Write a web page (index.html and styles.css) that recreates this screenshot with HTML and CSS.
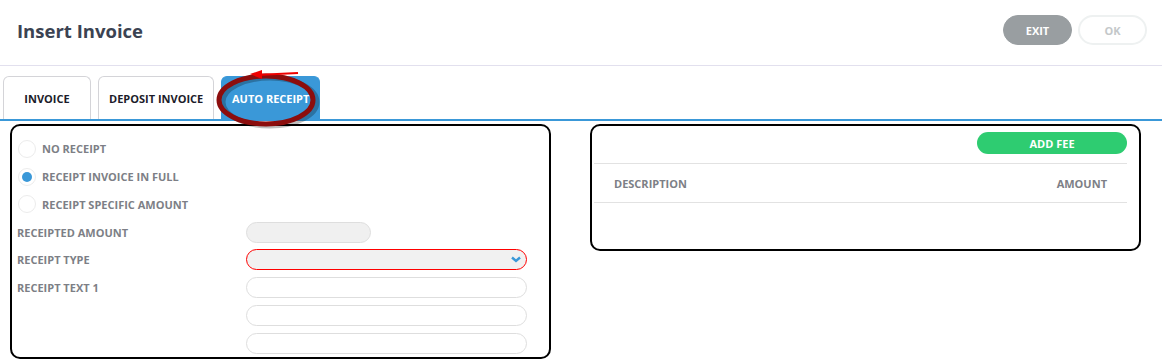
FILE: index.html
```html
<!DOCTYPE html>
<html lang="en">
<head>
    <meta charset="UTF-8">
    <meta name="viewport" content="width=device-width, initial-scale=1.0">
    <link rel="stylesheet" href="styles.css">
    <title>Insert Invoice</title>
</head>
<body>
    <header class="topbar">
        <h1>Insert Invoice</h1>
        <div class="actions">
            <button class="btn exit">EXIT</button>
            <button class="btn ok">OK</button>
        </div>
    </header>

    <nav class="tabs">
        <div class="tab">INVOICE</div>
        <div class="tab">DEPOSIT INVOICE</div>
        <div class="tab active">
            AUTO RECEIPT
            <svg class="mark" width="120" height="70" viewBox="0 0 120 70">
                <ellipse cx="58" cy="35" rx="47" ry="24" fill="none" stroke="#000" stroke-opacity=".25" stroke-width="5"/>
                <ellipse cx="54" cy="33" rx="47" ry="24" fill="none" stroke="#8c0d0d" stroke-width="5"/>
                <path d="M44 8 L86 6" stroke="#e00" stroke-width="2" fill="none"/>
                <path d="M38 7 L50 3 L50 12 Z" fill="#e00"/>
            </svg>
        </div>
    </nav>

    <main class="content">
        <section class="panel receipt">
            <label class="radio"><span class="dot"></span>NO RECEIPT</label>
            <label class="radio"><span class="dot on"></span>RECEIPT INVOICE IN FULL</label>
            <label class="radio"><span class="dot"></span>RECEIPT SPECIFIC AMOUNT</label>

            <div class="field">
                <span class="label">RECEIPTED AMOUNT</span>
                <div class="input short disabled"></div>
            </div>
            <div class="field">
                <span class="label">RECEIPT TYPE</span>
                <div class="input select">
                    <svg width="10" height="7" viewBox="0 0 10 7"><path d="M1 1.5 L5 5 L9 1.5" stroke="#3a98d8" stroke-width="2.4" fill="none"/></svg>
                </div>
            </div>
            <div class="field">
                <span class="label">RECEIPT TEXT 1</span>
                <div class="input"></div>
            </div>
            <div class="field">
                <span class="label"></span>
                <div class="input"></div>
            </div>
            <div class="field">
                <span class="label"></span>
                <div class="input"></div>
            </div>
        </section>

        <section class="panel fees">
            <div class="fee-bar">
                <button class="btn add">ADD FEE</button>
            </div>
            <div class="fee-head">
                <span>DESCRIPTION</span>
                <span>AMOUNT</span>
            </div>
        </section>
    </main>
</body>
</html>
```

FILE: styles.css
```css
body{
    margin: 0;
    font-family: "Open Sans", "Noto Sans", sans-serif;
    background: #fff;
    color: #333;
}

.topbar{
    height: 60px;
    padding: 0 15px 5px 17px;
    display: flex;
    align-items: center;
    justify-content: space-between;
    border-bottom: 1px solid #e2e0ee;
}

.topbar h1{
    margin: 0;
    font-size: 18.5px;
    font-weight: 700;
    color: #3b4352;
}

.actions{
    display: flex;
    gap: 6px;
}

.btn{
    font-family: inherit;
    font-size: 11px;
    font-weight: 700;
    border-radius: 16px;
    cursor: pointer;
}

.exit, .ok{
    width: 69px;
    height: 30px;
}

.exit{
    background: #999ea1;
    border: 1px solid #999ea1;
    color: #fff;
}

.ok{
    background: #fff;
    border: 2px solid #eef1f1;
    color: #c4c8ca;
}

.tabs{
    display: flex;
    gap: 7px;
    padding: 10px 0 0 3px;
    border-bottom: 2px solid #3a98d8;
}

.tab{
    position: relative;
    height: 42px;
    padding: 0 10px;
    display: flex;
    align-items: center;
    justify-content: center;
    white-space: nowrap;
    font-size: 11px;
    font-weight: 700;
    color: #1c1c2a;
    border: 1px solid #d4d4d8;
    border-bottom: none;
    border-radius: 6px 6px 0 0;
}

.tab:first-child{
    width: 66px;
}

.tab.active{
    width: 77px;
    background: #3a98d8;
    border-color: #3a98d8;
    color: #fff;
}

.mark{
    position: absolute;
    left: -10px;
    top: -10px;
    z-index: 2;
}

.content{
    display: flex;
    gap: 39px;
    align-items: flex-start;
    padding: 3px 21px 0 10px;
}

.panel{
    border: 2px solid #000;
    border-radius: 10px;
    box-sizing: border-box;
}

.receipt{
    width: 541px;
    height: 235px;
    padding: 9px 22px 0 5px;
    display: flex;
    flex-direction: column;
}

.radio, .field{
    height: 28px;
    display: flex;
    align-items: center;
    font-size: 11px;
    font-weight: 700;
    color: #7d7f86;
}

.dot{
    width: 18px;
    height: 18px;
    box-sizing: border-box;
    border-radius: 50%;
    border: 1px solid #ececec;
    margin: 0 6px 0 1px;
    position: relative;
}

.dot.on::after{
    content: "";
    position: absolute;
    inset: 3px;
    border-radius: 50%;
    background: #3a98d8;
}

.label{
    width: 229px;
}

.input{
    flex: 1;
    height: 21px;
    box-sizing: border-box;
    border: 1px solid #dedede;
    border-radius: 11px;
    background: #fff;
}

.input.short{
    flex: none;
    width: 125px;
}

.input.disabled{
    background: #f0f0f0;
}

.input.select{
    background: #f1f1f1;
    border-color: #f00;
    display: flex;
    align-items: center;
    justify-content: flex-end;
    padding-right: 5px;
}

.fees{
    flex: 1;
    height: 127px;
    padding: 6px 12px 0 2px;
}

.fee-bar{
    display: flex;
    justify-content: flex-end;
    padding-bottom: 9px;
    border-bottom: 1px solid #e2e2e2;
}

.add{
    width: 150px;
    height: 22px;
    border: none;
    background: #2ecc71;
    color: #fff;
}

.fee-head{
    height: 38px;
    display: flex;
    align-items: center;
    justify-content: space-between;
    padding: 0 20px;
    font-size: 11px;
    font-weight: 700;
    color: #7d7f86;
    border-bottom: 1px solid #e2e2e2;
}
```
